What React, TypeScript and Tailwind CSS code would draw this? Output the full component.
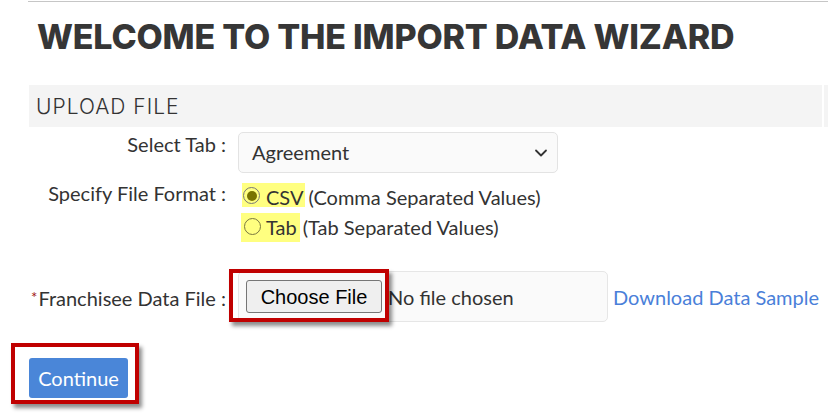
import React from "react";

const sans = { fontFamily: "Lato, 'Noto Sans', sans-serif" };
const display = { fontFamily: "Inter, 'Open Sans', sans-serif" };

export default function App() {
  return (
    <div className="relative w-[828px] h-[413px] overflow-hidden bg-white text-[#333]" style={sans}>
      <div className="ml-[28px] mt-[1px] h-[1px] bg-[#c6c6c6]" />
      <h1
        className="ml-[37px] mt-[18px] text-[34px] leading-[34px] font-extrabold text-[#363636] tracking-[-0.2px]"
        style={display}
      >
        WELCOME TO THE IMPORT DATA WIZARD
      </h1>
      <div className="mt-[31px] flex gap-[2px] h-[42px]">
        <div className="ml-[29px] w-[793px] bg-[#f4f4f4] flex items-center pl-[7px]">
          <span className="text-[21px] font-light text-[#333] tracking-[1px] pt-[1px]" style={display}>
            UPLOAD FILE
          </span>
        </div>
        <div className="flex-1 bg-[#f4f4f4]" />
      </div>

      <div className="grid grid-cols-[226px_1fr] gap-x-[12px] mt-[5px] text-[20px] leading-[24px]">
        {/* Select Tab */}
        <div className="text-right">Select Tab :</div>
        <div>
          <div className="w-[320px] h-[41px] rounded-[5px] border border-[#e3e3e3] bg-[#fafafa] flex items-center justify-between pl-[13px] pr-[9px]">
            <span className="-mt-[1px]">Agreement</span>
            <svg width="14" height="14" viewBox="0 0 14 14" fill="none">
              <path d="M2 4.5 L7 9.5 L12 4.5" stroke="#333" strokeWidth="1.8" strokeLinecap="round" strokeLinejoin="round" />
            </svg>
          </div>
        </div>

        {/* Format */}
        <div className="text-right mt-[8px]">Specify File Format :</div>
        <div className="mt-[10px] flex flex-col gap-[6px] items-start">
          <div className="flex h-[24px]">
            <span className="flex h-[24px] bg-[#ffff80] ml-[4px] pl-[1px] pr-[1px]">
              <span className="mt-[4px] w-[17px] h-[17px] rounded-full border-[1.5px] border-[#777] flex items-center justify-center">
                <span className="w-[10px] h-[10px] rounded-full bg-[#787300]" />
              </span>
              <span className="mt-[2px] ml-[6px]">CSV</span>
            </span>
            <span className="mt-[2px] ml-[4px]">(Comma Separated Values)</span>
          </div>
          <div className="flex h-[29px]">
            <span className="flex h-[29px] bg-[#ffff80] ml-[3px] pl-[3px] pr-[3px]">
              <span className="mt-[5px] w-[17px] h-[17px] rounded-full border-[1.5px] border-[#7a7840]" />
              <span className="ml-[5px] leading-[26px] pt-[1px]">Tab</span>
            </span>
            <span className="ml-[3px] leading-[26px] pt-[1px]">(Tab Separated Values)</span>
          </div>
        </div>

        {/* File */}
        <div className="text-right mt-[29px] h-[51px] flex items-center justify-end pt-[2px]">
          <span>
            <span className="text-[#a01010] text-[15px] align-top relative top-[-1px] mr-[1px]">*</span>Franchisee Data File :
          </span>
        </div>
        <div className="mt-[29px] flex items-center">
          <div className="w-[370px] h-[51px] rounded-[5px] border border-[#e6e6e6] bg-[#fafafa] flex items-center pl-[7px]">
            <button
              className="h-[33px] w-[136px] rounded-[3px] border border-[#767676] bg-[#efefef] text-[20px] text-black"
              style={{ fontFamily: "'Liberation Sans', Arial, sans-serif" }}
            >
              Choose File
            </button>
            <span className="ml-[6px]">No file chosen</span>
          </div>
          <a className="ml-[5px] text-[#4a7fd9]">Download Data Sample</a>
        </div>
      </div>

      <div className="ml-[29px] mt-[36px]">
        <button className="w-[99px] h-[40px] rounded-[3px] bg-[#4a86d8] text-white text-[20px]">Continue</button>
      </div>

      {/* annotation boxes */}
      <div className="absolute left-[229px] top-[269px] w-[160px] h-[53px] border-[4px] border-[#c00000] shadow-[3px_4px_4px_rgba(0,0,0,0.45)] pointer-events-none" />
      <div className="absolute left-[11px] top-[343px] w-[128px] h-[61px] border-[4px] border-[#c00000] shadow-[3px_4px_4px_rgba(0,0,0,0.45)] pointer-events-none" />
    </div>
  );
}
